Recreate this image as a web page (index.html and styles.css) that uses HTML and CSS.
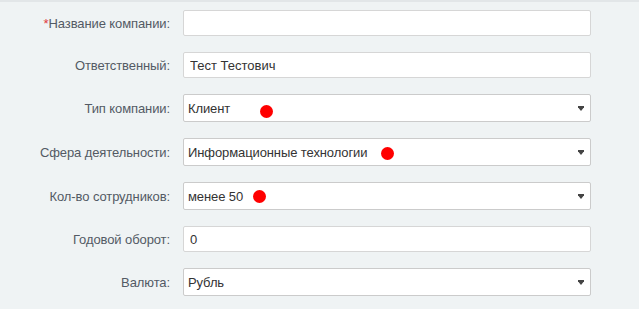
FILE: index.html
```html
<!DOCTYPE html>
<html lang="ru">
<head>
    <meta charset="UTF-8">
    <title>Компания</title>
    <link rel="stylesheet" href="styles.css">
</head>
<body>
<form class="company-form">
    <div class="row">
        <label class="label"><span class="req">*</span>Название компании:</label>
        <div class="field"><input class="input" type="text" value=""></div>
    </div>
    <div class="row">
        <label class="label">Ответственный:</label>
        <div class="field"><input class="input" type="text" value="Тест Тестович"></div>
    </div>
    <div class="row">
        <label class="label">Тип компании:</label>
        <div class="field">
            <select class="select"><option>Клиент</option></select>
            <i class="dot dot-type"></i>
        </div>
    </div>
    <div class="row">
        <label class="label">Сфера деятельности:</label>
        <div class="field">
            <select class="select"><option>Информационные технологии</option></select>
            <i class="dot dot-sphere"></i>
        </div>
    </div>
    <div class="row">
        <label class="label">Кол-во сотрудников:</label>
        <div class="field">
            <select class="select"><option>менее 50</option></select>
            <i class="dot dot-staff"></i>
        </div>
    </div>
    <div class="row">
        <label class="label">Годовой оборот:</label>
        <div class="field"><input class="input" type="text" value="0"></div>
    </div>
    <div class="row">
        <label class="label">Валюта:</label>
        <div class="field">
            <select class="select"><option>Рубль</option></select>
        </div>
    </div>
</form>
</body>
</html>
```

FILE: styles.css
```css
* {
    margin: 0;
    padding: 0;
    box-sizing: border-box;
}

body {
    background-color: #eff3f4;
    border-top: 2px solid #e2e6e8;
    font-family: "Liberation Sans", Arial, sans-serif;
    font-size: 13px;
}

.company-form {
    padding-top: 8px;
}

.row {
    display: flex;
    align-items: center;
    margin-bottom: 16px;
}

.label {
    width: 183px;
    padding-right: 13px;
    text-align: right;
    color: #535a64;
    letter-spacing: -0.1px;
}

.req {
    color: #e0393e;
}

.field {
    position: relative;
    width: 408px;
}

.input,
.select {
    display: block;
    width: 100%;
    padding: 0 6px;
    font-family: inherit;
    font-size: 13px;
    color: #333;
    background-color: #fff;
    border-radius: 2px;
    outline: none;
}

.input {
    height: 26px;
    border: 1px solid #d6d6d6;
}

.select {
    height: 28px;
    padding-left: 4px;
    border: 1px solid #cbcbcb;
    letter-spacing: -0.1px;
    -webkit-appearance: none;
    appearance: none;
    background-image: url("data:image/svg+xml,%3Csvg xmlns='http://www.w3.org/2000/svg' width='6' height='5'%3E%3Cpath d='M0 0h6v1.2L3 5 0 1.2z' fill='%23444'/%3E%3C/svg%3E");
    background-repeat: no-repeat;
    background-position: right 6px center;
}

/* красные метки */
.dot {
    position: absolute;
    width: 13px;
    height: 13px;
    border-radius: 50%;
    background-color: #f00;
}

.dot-type {
    left: 77px;
    top: 11px;
}

.dot-sphere {
    left: 198px;
    top: 9px;
}

.dot-staff {
    left: 70px;
    top: 8px;
}
```
